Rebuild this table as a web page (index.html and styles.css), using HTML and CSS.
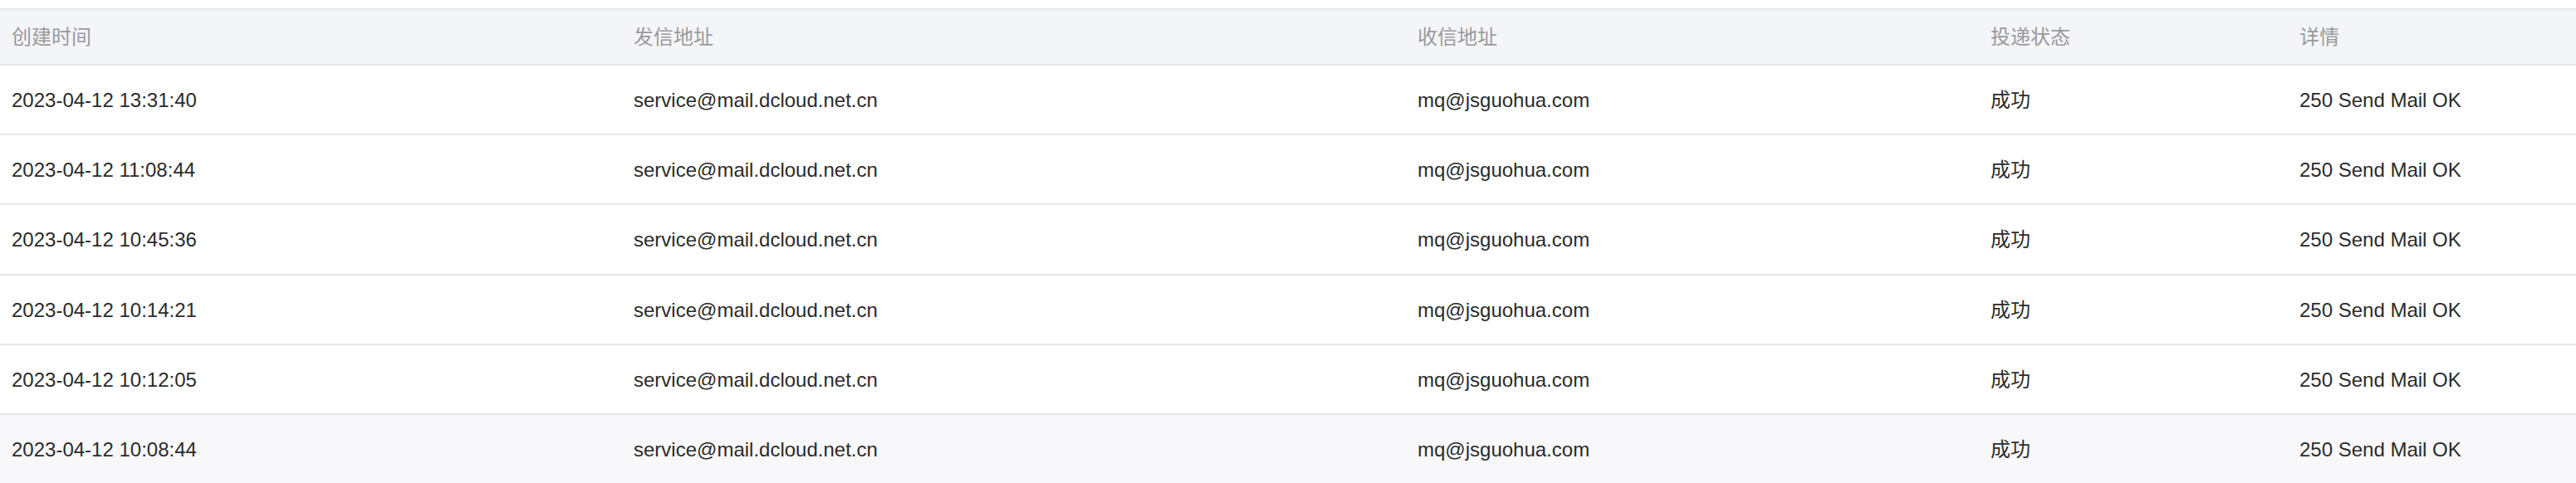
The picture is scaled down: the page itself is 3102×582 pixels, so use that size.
FILE: index.html
```html
<!DOCTYPE html>
<html lang="zh-CN">
  <head>
    <meta charset="UTF-8" />
    <meta name="viewport" content="width=device-width, initial-scale=1.0" />
    <title>投递记录</title>
    <link rel="stylesheet" href="styles.css">
  </head>
  <body>
    <div class="log-wrap">
      <table class="log-table">
        <colgroup>
          <col class="c-time" />
          <col class="c-from" />
          <col class="c-to" />
          <col class="c-status" />
          <col class="c-detail" />
        </colgroup>
        <thead>
          <tr>
            <th>创建时间</th>
            <th>发信地址</th>
            <th>收信地址</th>
            <th>投递状态</th>
            <th>详情</th>
          </tr>
        </thead>
        <tbody>
          <tr>
            <td>2023-04-12 13:31:40</td>
            <td>service@mail.dcloud.net.cn</td>
            <td>mq@jsguohua.com</td>
            <td>成功</td>
            <td>250 Send Mail OK</td>
          </tr>
          <tr>
            <td>2023-04-12 11:08:44</td>
            <td>service@mail.dcloud.net.cn</td>
            <td>mq@jsguohua.com</td>
            <td>成功</td>
            <td>250 Send Mail OK</td>
          </tr>
          <tr>
            <td>2023-04-12 10:45:36</td>
            <td>service@mail.dcloud.net.cn</td>
            <td>mq@jsguohua.com</td>
            <td>成功</td>
            <td>250 Send Mail OK</td>
          </tr>
          <tr>
            <td>2023-04-12 10:14:21</td>
            <td>service@mail.dcloud.net.cn</td>
            <td>mq@jsguohua.com</td>
            <td>成功</td>
            <td>250 Send Mail OK</td>
          </tr>
          <tr>
            <td>2023-04-12 10:12:05</td>
            <td>service@mail.dcloud.net.cn</td>
            <td>mq@jsguohua.com</td>
            <td>成功</td>
            <td>250 Send Mail OK</td>
          </tr>
          <tr class="is-hover">
            <td>2023-04-12 10:08:44</td>
            <td>service@mail.dcloud.net.cn</td>
            <td>mq@jsguohua.com</td>
            <td>成功</td>
            <td>250 Send Mail OK</td>
          </tr>
        </tbody>
      </table>
    </div>
  </body>
</html>
```

FILE: styles.css
```css
body {
  margin: 0;
  background-color: #fff;
  color: #333;
  font-family: "Liberation Sans", "Noto Sans CJK SC", sans-serif;
  font-size: 24px;
  line-height: 28px;
}

.log-wrap {
  padding-top: 10px;
}

.log-table {
  width: 100%;
  border-collapse: collapse;
  table-layout: fixed;
  border-top: 2px solid #e4e6eb;
}

.c-time {
  width: 749px;
}

.c-from {
  width: 944px;
}

.c-to {
  width: 690px;
}

.c-status {
  width: 372px;
}

.log-table th,
.log-table td {
  text-align: left;
  padding: 0 14px;
  white-space: nowrap;
  overflow: hidden;
  border-bottom: 2px solid #e4e6eb;
  vertical-align: middle;
}

.log-table th {
  height: 65px;
  background-color: #f4f5f9;
  color: #9a9a9a;
  font-weight: normal;
}

.log-table td {
  height: 80.2px;
  padding-top: 2px;
  color: #2b2b2b;
}

.log-table tr.is-hover td {
  background-color: #f8f8fa;
}
```
